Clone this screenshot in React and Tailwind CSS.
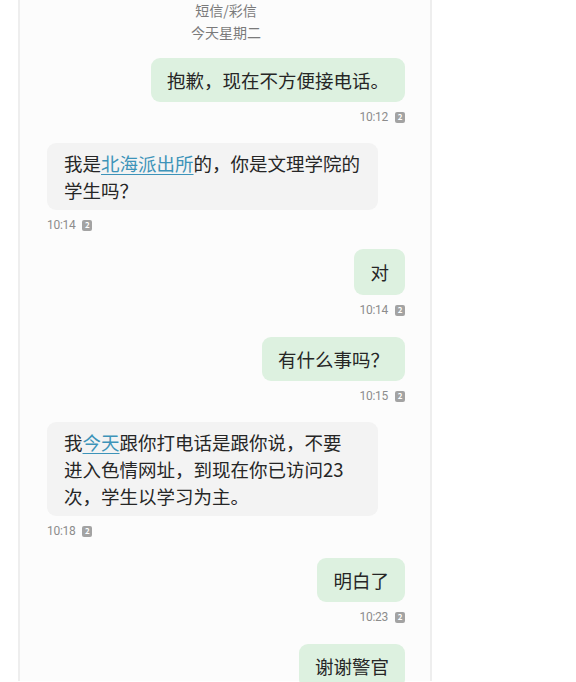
const messages = [
  { side: "right", time: "10:12", gap: "mt-[15px]", lines: ["抱歉，现在不方便接电话。"] },
  {
    side: "left",
    time: "10:14",
    gap: "mt-[18px]",
    lines: [
      [{ t: "我是" }, { t: "北海派出所", link: true }, { t: "的，你是文理学院的" }],
      [{ t: "学生吗？" }],
    ],
  },
  { side: "right", time: "10:14", gap: "mt-[16px]", lines: ["对"], tall: true },
  { side: "right", time: "10:15", gap: "mt-[19px]", lines: ["有什么事吗？"] },
  {
    side: "left",
    time: "10:18",
    gap: "mt-[18px]",
    lines: [
      [{ t: "我" }, { t: "今天", link: true }, { t: "跟你打电话是跟你说，不要" }],
      [{ t: "进入色情网址，到现在你已访问23" }],
      [{ t: "次，学生以学习为主。" }],
    ],
  },
  { side: "right", time: "10:23", gap: "mt-[19px]", lines: ["明白了"] },
  { side: "right", time: null, gap: "mt-[19px]", lines: ["谢谢警官"] },
];

// small grey SIM badge next to the timestamp
function SimBadge() {
  return (
    <span className="inline-flex items-center justify-center w-[10px] h-[11px] rounded-[2px] bg-[#a3a3a3] text-white text-[8px] font-bold leading-none">
      2
    </span>
  );
}

function TimeRow({ time, side }) {
  return (
    <div className={`mt-[7px] h-[16px] flex items-center gap-[7px] ${side === "right" ? "justify-end" : "justify-start"}`}>
      <span className="text-[12px] text-[#8c8c8c] font-['Roboto',sans-serif] tracking-[-0.3px]">{time}</span>
      <SimBadge />
    </div>
  );
}

function Bubble({ msg }) {
  if (msg.side === "right") {
    return (
      <div className={`flex justify-end ${msg.gap}`}>
        <div
          className={`bg-[#ddf1e0] rounded-[9px] px-[16px] flex items-center text-[18.5px] leading-[27px] text-[#262626] ${msg.tall ? "h-[46px]" : "h-[44px]"}`}
        >
          {msg.lines[0]}
        </div>
      </div>
    );
  }
  return (
    <div className={`flex justify-start ${msg.gap}`}>
      <div className="w-[331px] bg-[#f3f3f3] rounded-[9px] pl-[17px] pr-[10px] py-[6.5px] text-[18.5px] leading-[27px] text-[#262626]">
        {msg.lines.map((line, i) => (
          <div key={i} className="whitespace-nowrap">
            {line.map((seg, j) =>
              seg.link ? (
                <span key={j} className="text-[#3d93b9] underline underline-offset-[3px] decoration-[1px]">
                  {seg.t}
                </span>
              ) : (
                <span key={j}>{seg.t}</span>
              )
            )}
          </div>
        ))}
      </div>
    </div>
  );
}

export default function App() {
  return (
    <div className="w-[576px] h-[682px] overflow-hidden bg-white font-['Noto_Sans_CJK_SC','Noto_Sans',sans-serif]">
      <div className="ml-[18px] w-[414px] h-full border-x-2 border-[#eeeeee] bg-[#fcfcfc] pl-[27px] pr-[25px]">
        {/* header */}
        <div className="-mt-px text-center text-[14px] leading-[22px] text-[#7a7a7a]">
          <div>短信/彩信</div>
          <div>今天星期二</div>
        </div>

        {messages.map((m, i) => (
          <div key={i}>
            <Bubble msg={m} />
            {m.time && <TimeRow time={m.time} side={m.side} />}
          </div>
        ))}
      </div>
    </div>
  );
}
